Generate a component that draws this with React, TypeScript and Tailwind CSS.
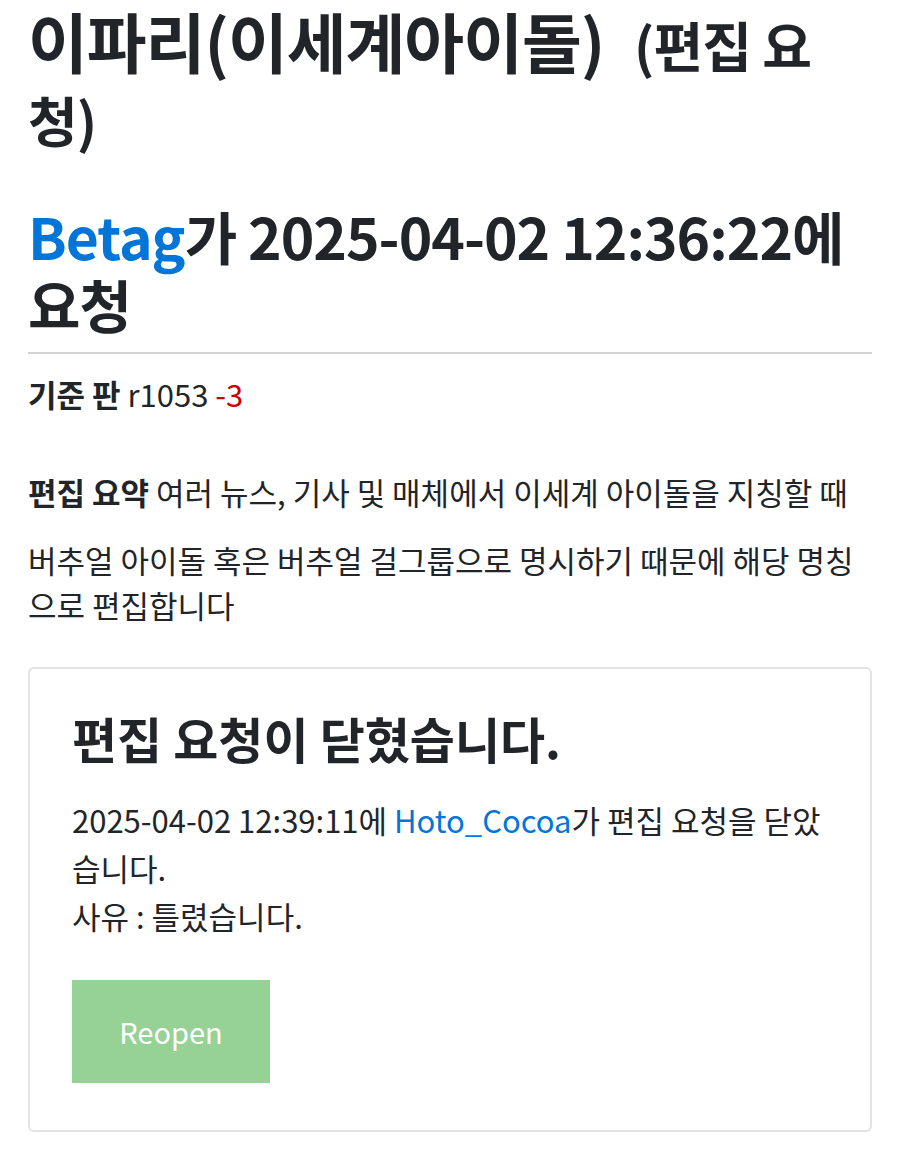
export default function App() {
  return (
    <div
      className="min-h-[1155px] bg-white px-[28px] pt-[5px] text-[#212529]"
      style={{ fontFamily: '"Noto Sans CJK KR", "Noto Sans", sans-serif' }}
    >
      <h1 className="text-[65px] font-bold leading-[70px] tracking-[-1px]">
        이파리(이세계아이돌) <span className="ml-[16px] text-[54px]">(편집 요청)</span>
      </h1>

      <h2 className="mt-[46px] text-[57px] font-bold leading-[68px] tracking-[-1px]">
        <a className="text-[#0275d8]">Betag</a>가 2025-04-02 12:36:22에 요청
      </h2>

      <hr className="mt-[15px] border-t-2 border-[#d3d3d3]" />

      <p className="mt-[16px] text-[31px] leading-[48px]">
        <b className="font-bold">기준 판</b> r1053 <span className="text-[#cc0000]">-3</span>
      </p>

      <div className="mt-[51px] text-[31px]">
        <p className="leading-[45px]">
          <b className="font-bold">편집 요약</b> 여러 뉴스, 기사 및 매체에서 이세계 아이돌을 지칭할 때
        </p>
        <p className="mt-[23px] leading-[45px]">
          버추얼 아이돌 혹은 버추얼 걸그룹으로 명시하기 때문에 해당 명칭으로 편집합니다
        </p>
      </div>

      <div className="mt-[40px] rounded-md border-2 border-[#e3e3e3] px-[42px] pb-[47px] pt-[39px]">
        <h3 className="text-[49px] font-bold leading-[60px]">편집 요청이 닫혔습니다.</h3>
        <p className="mt-[28px] text-[31px] leading-[48px]">
          2025-04-02 12:39:11에 <a className="text-[#0275d8]">Hoto_Cocoa</a>가 편집 요청을 닫았습니다.
          <br />
          사유 : 틀렸습니다.
        </p>
        <button className="mt-[40px] block h-[103px] w-[198px] bg-[#96d196] text-[29px] text-white">
          Reopen
        </button>
      </div>
    </div>
  );
}
